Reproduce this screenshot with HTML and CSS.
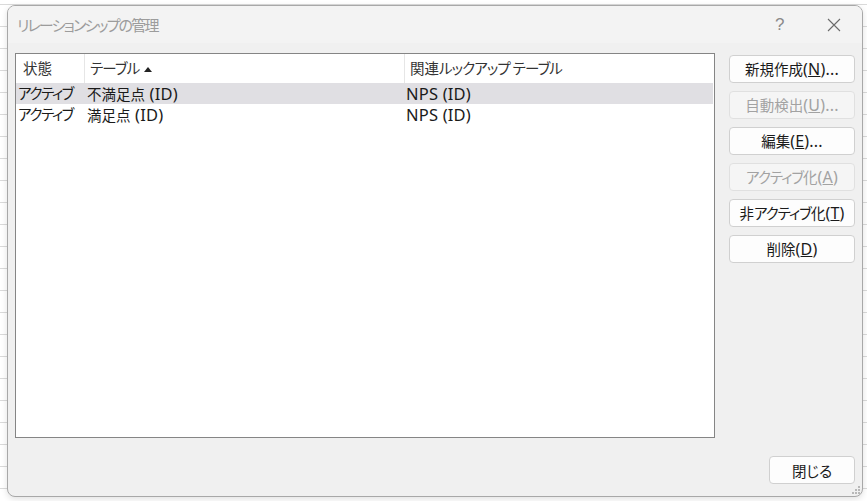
FILE: index.html
```html
<!DOCTYPE html>
<html lang="ja">
<head>
    <meta charset="UTF-8">
    <title>リレーションシップの管理</title>
    <link rel="stylesheet" href="styles.css">
</head>
<body>
    <div class="dialog">
        <!-- タイトルバー -->
        <div class="titlebar">
            <span class="title">リレーションシップの管理</span>
            <span class="help">?</span>
            <span class="close-x">
                <svg width="14" height="14" viewBox="0 0 14 14"><path d="M1 1 L13 13 M13 1 L1 13" stroke="#6b6b6b" stroke-width="1.1" fill="none"/></svg>
            </span>
        </div>

        <div class="dialog-body">
            <div class="main">
                <div class="listview">
                    <div class="lv-row lv-head">
                        <div class="cell">状態</div>
                        <div class="cell sep"><span class="kana">テーブル</span><span class="sort-up"></span></div>
                        <div class="cell sep">関連<span class="kana">ルックアップ テーブル</span></div>
                    </div>
                    <div class="lv-row selected">
                        <div class="cell kana">アクティブ</div>
                        <div class="cell">不満足点<span class="lat"> (ID)</span></div>
                        <div class="cell lat">NPS (ID)</div>
                    </div>
                    <div class="lv-row">
                        <div class="cell kana">アクティブ</div>
                        <div class="cell">満足点<span class="lat"> (ID)</span></div>
                        <div class="cell lat">NPS (ID)</div>
                    </div>
                </div>

                <div class="actions">
                    <button class="btn">新規作成<span class="lat">(<u>N</u>)...</span></button>
                    <button class="btn" disabled>自動検出<span class="lat">(<u>U</u>)...</span></button>
                    <button class="btn">編集<span class="lat">(<u>E</u>)...</span></button>
                    <button class="btn" disabled><span class="kana">アクティブ</span>化<span class="lat">(<u>A</u>)</span></button>
                    <button class="btn">非<span class="kana">アクティブ</span>化<span class="lat">(<u>T</u>)</span></button>
                    <button class="btn">削除<span class="lat">(<u>D</u>)</span></button>
                </div>
            </div>

            <div class="footer">
                <button class="btn btn-close">閉じる</button>
            </div>
        </div>

        <!-- サイズ変更グリップ -->
        <svg class="grip" width="10" height="10" viewBox="0 0 10 10">
            <rect x="7" y="1" width="2" height="2" fill="#b8b8b8"/>
            <rect x="4" y="4" width="2" height="2" fill="#b8b8b8"/>
            <rect x="7" y="4" width="2" height="2" fill="#b8b8b8"/>
            <rect x="1" y="7" width="2" height="2" fill="#b8b8b8"/>
            <rect x="4" y="7" width="2" height="2" fill="#b8b8b8"/>
            <rect x="7" y="7" width="2" height="2" fill="#b8b8b8"/>
        </svg>
    </div>
</body>
</html>
```

FILE: styles.css
```css
html, body {
    margin: 0;
    height: 100%;
}
body {
    font-family: "Noto Sans", "Noto Sans CJK JP", sans-serif;
    color: #1a1a1a;
    /* 後ろの Excel のグリッド */
    background-color: #ffffff;
    background-image:
        repeating-linear-gradient(to bottom, transparent 0, transparent 4px, #dadada 4px, #dadada 5px, transparent 5px, transparent 22px);
    overflow: hidden;
    padding-top: 5px;
    box-sizing: border-box;
}
.dialog {
    position: relative;
    margin-left: 7px;
    width: 856px;
    height: 492px;
    box-sizing: border-box;
    background: #f0f0f0;
    border: 1px solid #a8a8a8;
    border-radius: 8px;
    box-shadow: 0 2px 6px rgba(0, 0, 0, 0.12);
    display: flex;
    flex-direction: column;
    overflow: hidden;
}
.titlebar {
    height: 37px;
    background: #f3f3f3;
    display: flex;
    align-items: center;
    padding-left: 9px;
    flex-shrink: 0;
}
.title {
    font-size: 15px;
    color: #9c9c9c;
    font-feature-settings: "palt";
    letter-spacing: -1.8px;
    flex: 1;
}
.help {
    font-family: "Liberation Sans", sans-serif;
    font-size: 17px;
    color: #8a8a8a;
    width: 20px;
    margin-right: 32px;
}
.close-x {
    display: flex;
    margin-right: 21px;
}
.dialog-body {
    flex: 1;
    display: flex;
    flex-direction: column;
    padding: 10px 7px 12px 7px;
}
.main {
    display: flex;
    gap: 14px;
}
.listview {
    width: 700px;
    height: 385px;
    box-sizing: border-box;
    background: #ffffff;
    border: 1px solid #858585;
    font-size: 14.5px;
    font-feature-settings: "palt";
}
/* 仮名は詰めて表示 */
.kana {
    letter-spacing: -1.4px;
}
.lat {
    font-size: 16.5px;
    letter-spacing: 0.2px;
}
.lv-row {
    display: grid;
    grid-template-columns: 68px 320px 1fr;
    height: 21px;
    line-height: 21px;
    margin-right: 1px;
}
.lv-row .cell {
    white-space: nowrap;
    padding-left: 2px;
}
.lv-row .cell:nth-child(2) {
    padding-left: 3px;
}
.lv-head {
    height: 29px;
    line-height: 29px;
    color: #333;
}
.lv-head .cell {
    padding-left: 7px;
}
.lv-head .cell.sep {
    border-left: 1px solid #e6e6e6;
    padding-left: 5px;
}
.lv-head .kana {
    letter-spacing: -0.9px;
}
.sort-up {
    display: inline-block;
    width: 0;
    height: 0;
    border-left: 4px solid transparent;
    border-right: 4px solid transparent;
    border-bottom: 5px solid #222;
    vertical-align: 2px;
    margin-left: 5px;
}
.selected {
    background: #e0dfe3;
}
.actions {
    display: flex;
    flex-direction: column;
    gap: 8px;
    padding-top: 2px;
}
.btn {
    width: 126px;
    height: 28px;
    box-sizing: border-box;
    background: #fdfdfd;
    border: 1px solid #d0d0d0;
    border-radius: 4px;
    font-family: inherit;
    font-size: 14.5px;
    font-feature-settings: "palt";
    color: #1a1a1a;
    padding: 0;
    cursor: pointer;
    white-space: nowrap;
}
.btn .lat {
    font-size: 16px;
}
.btn .kana {
    letter-spacing: -1px;
}
.btn:disabled {
    background: #f5f5f5;
    border-color: #e0e0e0;
    color: #a2a2a2;
}
.footer {
    margin-top: auto;
    display: flex;
    justify-content: flex-end;
}
.btn-close {
    width: 86px;
}
.grip {
    position: absolute;
    right: 1px;
    bottom: 1px;
}
```
